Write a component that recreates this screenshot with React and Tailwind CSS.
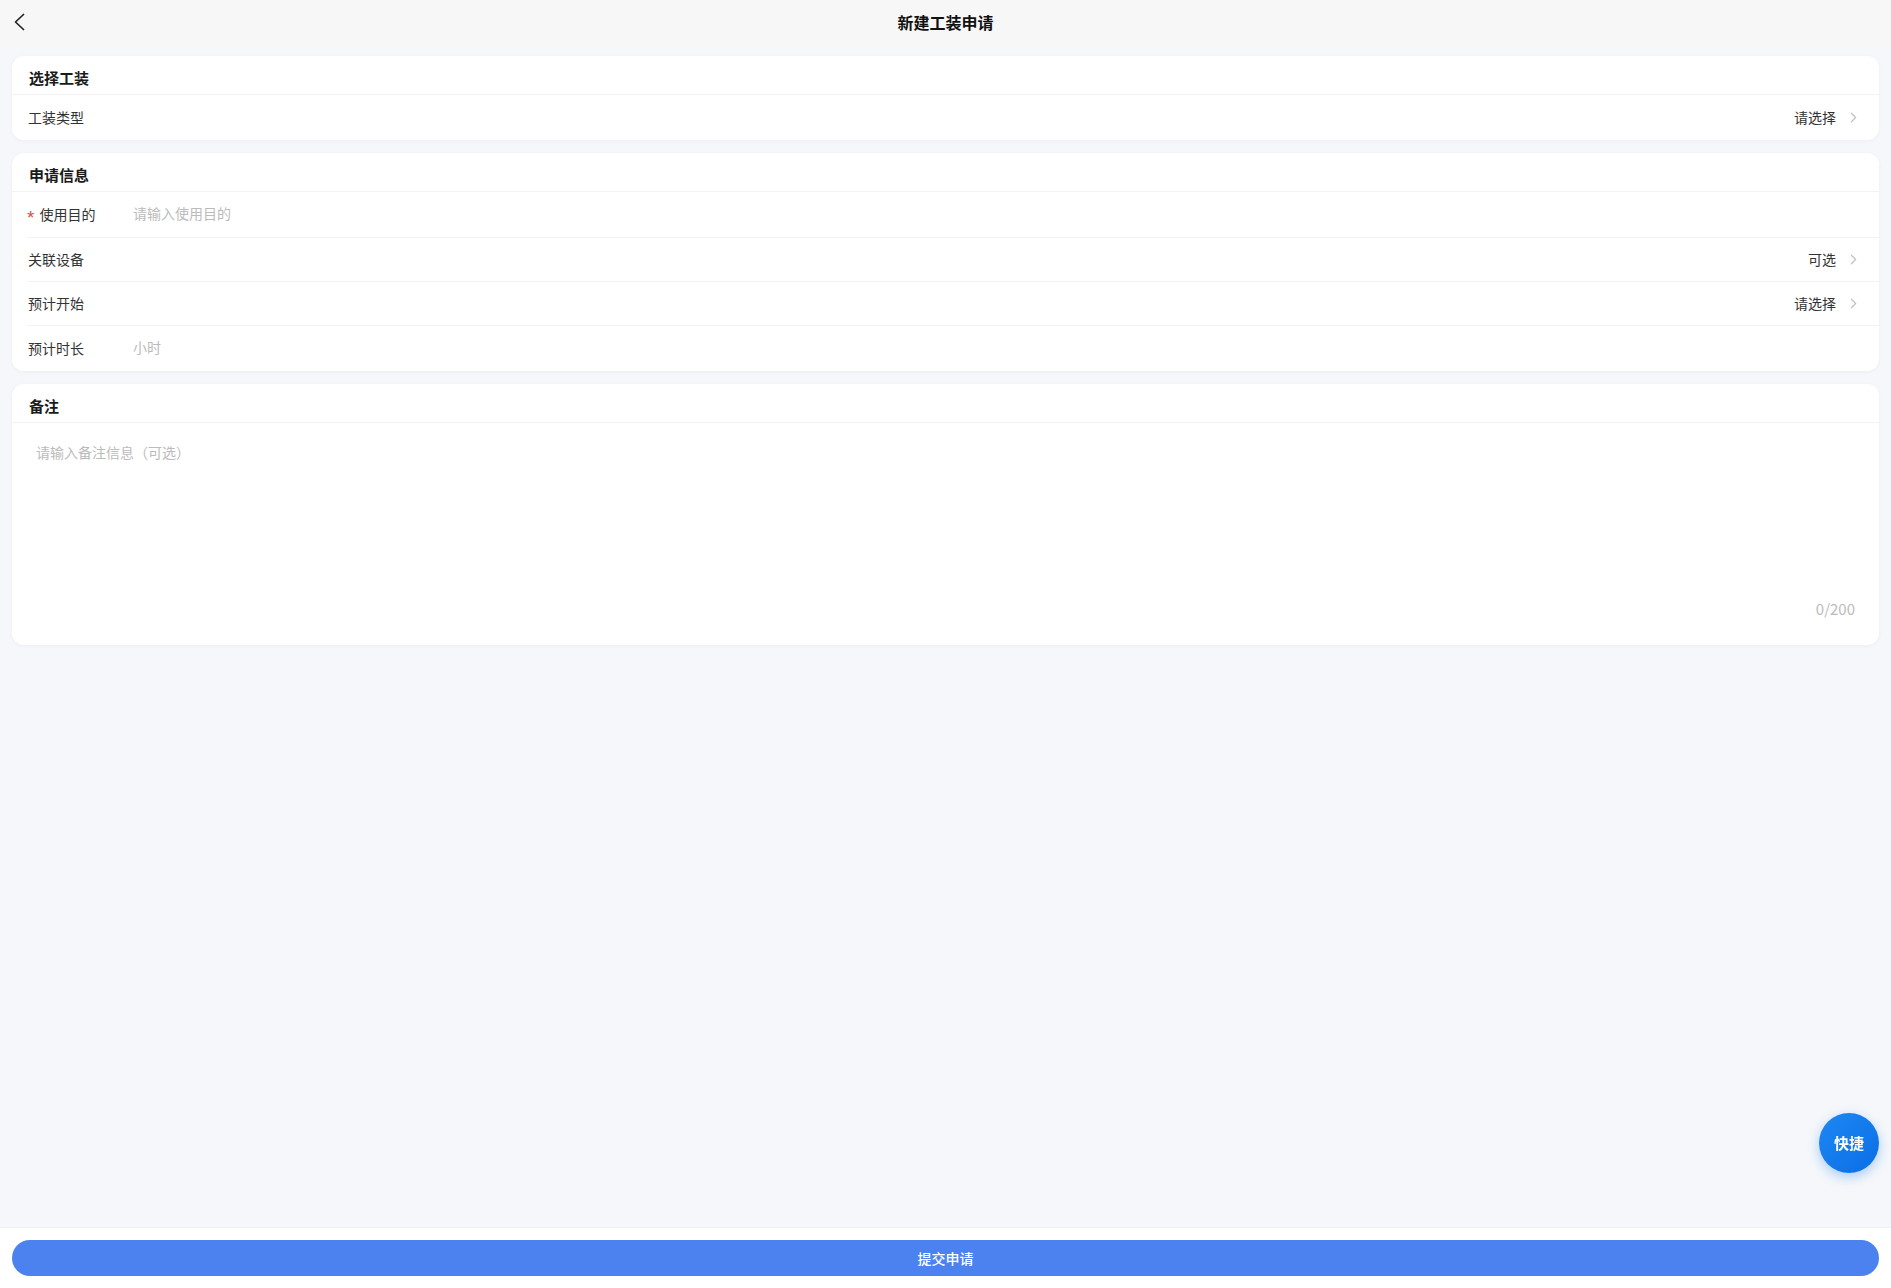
import React, { useState } from "react";
import { ChevronRight } from "lucide-react";

const FONT = '"Noto Sans CJK SC", "Noto Sans", "Liberation Sans", sans-serif';

const Card = ({ title, children }) => (
  <div className="bg-white rounded-[12px] shadow-[0_1px_4px_rgba(0,0,0,0.04)]">
    <div className="h-[39px] px-[17px] pt-[6px] flex items-center border-b border-[#f2f3f5] text-[15px] font-bold text-[#1a1a1a]">
      {title}
    </div>
    {children}
  </div>
);

const Row = ({ label, required, children, last, h = "h-[44px]" }) => (
  <div className="pl-[15px]">
    <div
      className={`${h} flex items-center pr-[17px] ${
        last ? "" : "border-b border-[#f2f3f5]"
      }`}
    >
      <div className="w-[106px] pl-[1px] flex items-center text-[14px] text-[#333]">
        {required && (
          <span
            className="text-[#e5484d] text-[19px] leading-none mr-[5px] -ml-[1px] translate-y-[3px]"
            style={{ fontFamily: '"Liberation Sans", sans-serif' }}
          >
            *
          </span>
        )}
        {label}
      </div>
      <div className="flex-1 flex items-center">{children}</div>
    </div>
  </div>
);

const SelectValue = ({ text }) => (
  <div className="ml-auto flex items-center gap-[9px] text-[14px] text-[#333]">
    <span>{text}</span>
    <ChevronRight size={17} strokeWidth={1.8} className="text-[#c4c4c4]" />
  </div>
);

const App = () => {
  const [purpose, setPurpose] = useState("");
  const [hours, setHours] = useState("");
  const [remark, setRemark] = useState("");

  return (
    <div
      className="h-[1288px] flex flex-col bg-[#f5f7fa] text-[#333]"
      style={{ fontFamily: FONT }}
    >
      {/* header */}
      <div className="h-[46px] shrink-0 bg-[#f7f7f7] flex items-center pb-[3px]">
        <button className="w-[48px] h-full flex items-center pl-[13px]">
          <svg width="12" height="18" viewBox="0 0 12 18" fill="none">
            <path
              d="M10.5 1.5 L2.5 9 L10.5 16.5"
              stroke="#222"
              strokeWidth="1.7"
              strokeLinecap="round"
              strokeLinejoin="round"
            />
          </svg>
        </button>
        <div className="flex-1 text-center text-[16px] font-bold text-[#111]">
          新建工装申请
        </div>
        <div className="w-[48px]" />
      </div>

      {/* content */}
      <div className="flex-1 px-[12px] pt-[10px] flex flex-col gap-[13px]">
        <Card title="选择工装">
          <Row label="工装类型" last h="h-[45px]">
            <SelectValue text="请选择" />
          </Row>
        </Card>

        <Card title="申请信息">
          <Row label="使用目的" required h="h-[46px]">
            <input
              value={purpose}
              onChange={(e) => setPurpose(e.target.value)}
              placeholder="请输入使用目的"
              className="w-full outline-none text-[14px] text-[#333] placeholder:text-[#bbbbbb] -mt-[2px]"
            />
          </Row>
          <Row label="关联设备">
            <SelectValue text="可选" />
          </Row>
          <Row label="预计开始">
            <SelectValue text="请选择" />
          </Row>
          <Row label="预计时长" last h="h-[45px]">
            <input
              value={hours}
              onChange={(e) => setHours(e.target.value)}
              placeholder="小时"
              className="w-full outline-none text-[14px] text-[#333] placeholder:text-[#bbbbbb] -mt-[2px]"
            />
          </Row>
        </Card>

        <Card title="备注">
          <div className="h-[222px] flex flex-col px-[24px] pt-[19px] pb-[26px]">
            <textarea
              value={remark}
              onChange={(e) => setRemark(e.target.value.slice(0, 200))}
              placeholder="请输入备注信息（可选）"
              className="flex-1 w-full resize-none outline-none text-[14px] leading-[20px] text-[#333] placeholder:text-[#bbbbbb]"
            />
            <div className="text-right text-[15px] text-[#bbbbbb] leading-[20px]">
              {remark.length}/200
            </div>
          </div>
        </Card>
      </div>

      {/* bottom bar */}
      <div className="shrink-0 h-[61px] bg-white border-t border-[#eef0f3] px-[12px] pt-[12px]">
        <button className="w-full h-[36px] rounded-full bg-[#4b82ef] text-white text-[14px] font-medium">
          提交申请
        </button>
      </div>

      {/* floating quick button */}
      <button className="fixed right-[12px] bottom-[115px] w-[60px] h-[60px] rounded-full bg-gradient-to-br from-[#1e88f2] to-[#0a6de6] text-white text-[15px] font-bold shadow-[0_4px_12px_rgba(24,124,240,0.35)]">
        快捷
      </button>
    </div>
  );
};

export default App;
